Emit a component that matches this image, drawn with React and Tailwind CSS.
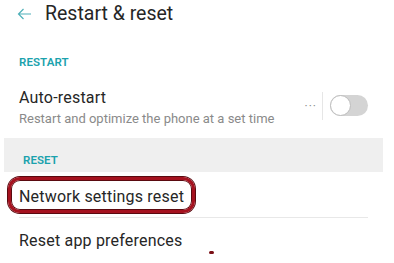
import React from 'react';

const Toggle = () => (
  <div className="relative w-[38px] h-[21px] rounded-full bg-[#d4d4d4]">
    <div className="absolute left-0 top-0 w-[21px] h-[21px] rounded-full bg-white border border-[#bdbdbd]" />
  </div>
);

const SectionLabel = ({ children, className = '' }) => (
  <div className={`pl-[19px] text-[11.5px] leading-[16px] font-semibold tracking-[0.1px] text-[#1ba2ad] ${className}`}>
    {children}
  </div>
);

const App = () => {
  return (
    <div
      className="relative w-[394px] h-[263px] overflow-hidden bg-white text-[#262626]"
      style={{ fontFamily: 'Roboto, "Noto Sans", sans-serif' }}
    >
      {/* Header */}
      <div className="flex items-center h-[28px] pl-[17px]">
        <svg width="15" height="12" viewBox="0 0 15 12" fill="none" stroke="#4fb0b9" strokeWidth="1.2">
          <path d="M14 6H1.5M6.5 1L1.5 6l5 5" />
        </svg>
        <span className="ml-[13px] text-[19.5px] leading-[28px] text-[#262626]">Restart &amp; reset</span>
      </div>

      <SectionLabel className="mt-[26px]">RESTART</SectionLabel>

      {/* Auto-restart */}
      <div className="flex items-center mt-[18px] pl-[19px] pr-[26px]">
        <div className="flex-1">
          <div className="text-[16px] leading-[20px] tracking-[0.2px]">Auto-restart</div>
          <div className="mt-[3px] text-[13px] leading-[16px] text-[#8a8a8a]">
            Restart and optimize the phone at a set time
          </div>
        </div>
        <div className="flex items-center -mt-[4px]">
          <span className="text-[12px] leading-none tracking-[1px] text-[#8f8f8f]">···</span>
          <div className="ml-[5px] w-px h-[28px] bg-[#e6e6e6]" />
          <div className="ml-[7px]">
            <Toggle />
          </div>
        </div>
      </div>

      {/* Reset band */}
      <div className="mt-[11px] mx-[4px] w-[379px] h-[34px] pt-[14px] bg-[#efefef]">
        <SectionLabel className="pl-[15px]">RESET</SectionLabel>
      </div>

      {/* Network settings reset */}
      <div className="ml-[19px] w-[349px] mt-[15px] pb-[10px] border-b border-[#e8e8e8]">
        <div className="relative text-[16px] leading-[20px] tracking-[0.2px]">
          Network settings reset
          <div className="absolute -left-[11px] -top-[10px] w-[187px] h-[36px] rounded-[12px] border-[3px] border-[#a5121f] shadow-[0_0_0_1px_#5a0a10,inset_0_0_0_1px_#5a0a10]" />
        </div>
      </div>

      <div className="mt-[13px] pl-[19px] text-[16px] leading-[20px] tracking-[0.2px]">
        Reset app preferences
      </div>

      {/* stray annotation mark */}
      <div className="absolute left-[209px] top-[251px] w-[5px] h-[3px] bg-[#7a1016] rounded-sm" />
    </div>
  );
};

export default App;
